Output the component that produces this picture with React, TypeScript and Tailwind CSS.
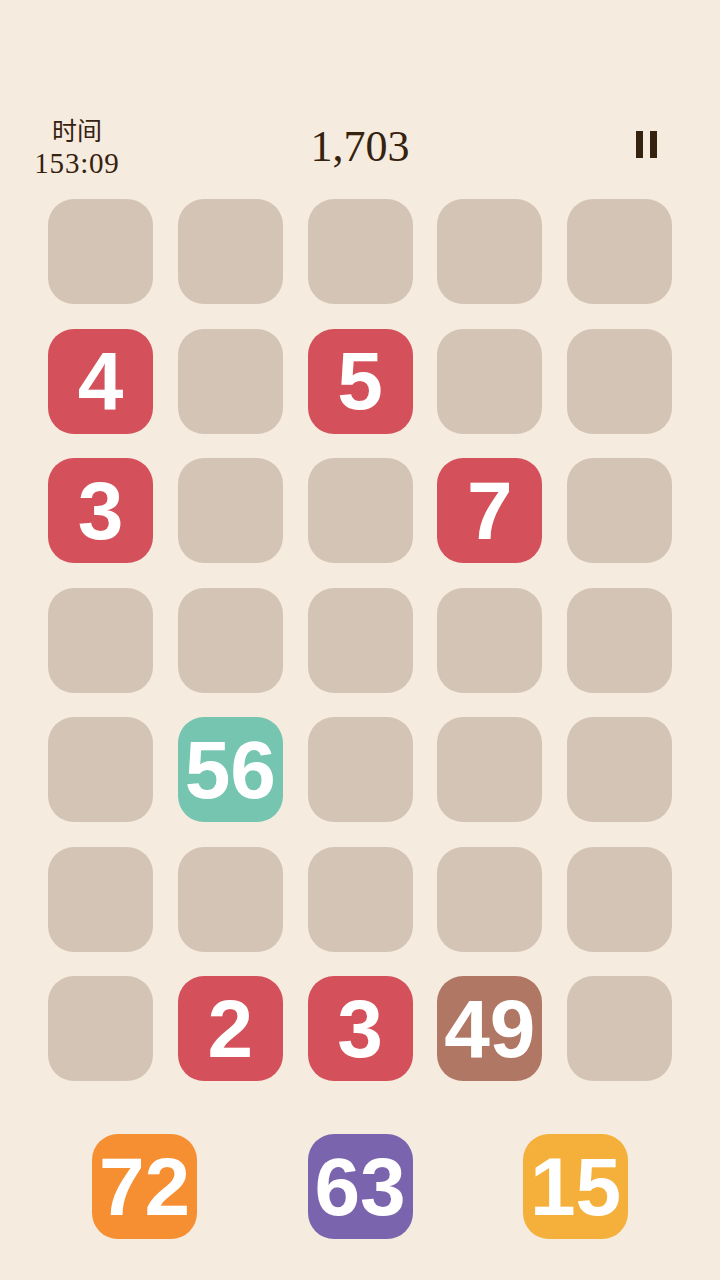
import React from "react";

type Cell = { v: number; c: string } | null;

const R = "bg-[#d4505a]";

const board: Cell[][] = [
  [null, null, null, null, null],
  [{ v: 4, c: R }, null, { v: 5, c: R }, null, null],
  [{ v: 3, c: R }, null, null, { v: 7, c: R }, null],
  [null, null, null, null, null],
  [null, { v: 56, c: "bg-[#75c5b0]" }, null, null, null],
  [null, null, null, null, null],
  [null, { v: 2, c: R }, { v: 3, c: R }, { v: 49, c: "bg-[#b07864]" }, null],
];

const queue = [
  { v: 72, c: "bg-[#f68f32]" },
  { v: 63, c: "bg-[#7b64ae]" },
  { v: 15, c: "bg-[#f4b03b]" },
];

const Tile: React.FC<{ cell: Cell }> = ({ cell }) => (
  <div
    className={`w-[105px] h-[105px] rounded-[26px] flex items-center justify-center ${
      cell ? cell.c : "bg-[#d3c4b6]"
    }`}
  >
    {cell && (
      <span
        className="text-white font-bold text-[82px] leading-none"
        style={{ fontFamily: '"Liberation Sans", Arial, sans-serif' }}
      >
        {cell.v}
      </span>
    )}
  </div>
);

const App: React.FC = () => {
  return (
    <div className="min-h-screen w-[720px] bg-[#f5ebdf] text-[#35220f]">
      <header className="flex items-start pt-[111px] h-[199px]">
        <div
          className="w-[154px] flex flex-col items-center"
          style={{ fontFamily: '"Liberation Serif", "Noto Sans CJK SC", serif' }}
        >
          <span
            className="text-[25px] leading-[36px]"
            style={{ fontFamily: '"Noto Sans CJK SC", sans-serif' }}
          >
            时间
          </span>
          <span className="text-[29px] leading-[32px] tracking-[0.8px]">153:09</span>
        </div>
        <div
          className="flex-1 flex justify-center pt-[11px] pr-[6px] text-[44px] leading-[50px]"
          style={{ fontFamily: '"Liberation Serif", serif' }}
        >
          1,703
        </div>
        <div className="w-[148px] flex justify-center pt-[20px]">
          <div className="flex gap-[7px]">
            <div className="w-[7px] h-[27px] bg-[#35220f]" />
            <div className="w-[7px] h-[27px] bg-[#35220f]" />
          </div>
        </div>
      </header>

      <div className="grid grid-cols-[repeat(5,105px)] gap-x-[24.75px] gap-y-[24.5px] pl-[48px]">
        {board.flat().map((cell, i) => (
          <Tile key={i} cell={cell} />
        ))}
      </div>

      <div className="flex pt-[53px] pl-[92px] gap-[110.5px]">
        {queue.map((q, i) => (
          <Tile key={i} cell={q} />
        ))}
      </div>
    </div>
  );
};

export default App;
